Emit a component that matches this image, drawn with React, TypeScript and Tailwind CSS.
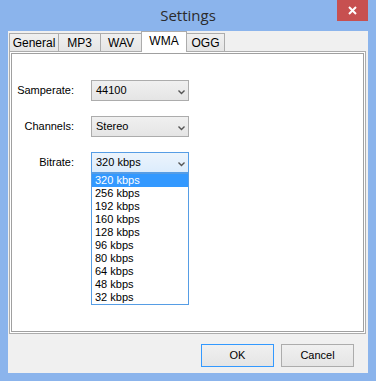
import React from 'react';

const BITRATES = ['320 kbps', '256 kbps', '192 kbps', '160 kbps', '128 kbps', '96 kbps', '80 kbps', '64 kbps', '48 kbps', '32 kbps'];

const TABS = [
  { name: 'General', w: 'w-[50px]' },
  { name: 'MP3', w: 'w-[43px]' },
  { name: 'WAV', w: 'w-[42px]' },
  { name: 'WMA', w: 'w-[46px]' },
  { name: 'OGG', w: 'w-[39px]' },
];

function Chevron() {
  return (
    <svg width="7" height="5" viewBox="0 0 7 5" className="absolute right-[3px] top-[9px]">
      <path d="M0.5 0.5 L3.5 3.5 L6.5 0.5" fill="none" stroke="#555" strokeWidth="1.4" />
    </svg>
  );
}

function Select({ value, focused }: { value: string; focused?: boolean }) {
  return (
    <div
      className={
        focused
          ? 'relative w-[98px] h-[21px] border border-[#569de5] bg-gradient-to-b from-[#ecf4fc] to-[#dcecfc] pl-[4px] leading-[19px]'
          : 'relative w-[98px] h-[21px] border border-[#acacac] bg-gradient-to-b from-[#f0f0f0] to-[#e5e5e5] pl-[4px] leading-[19px]'
      }
    >
      {value}
      <Chevron />
    </div>
  );
}

function Row({ label, children }: { label: string; children: React.ReactNode }) {
  return (
    <div className="flex items-center">
      <div className="w-[62px] text-right">{label}</div>
      <div className="ml-[17px]">{children}</div>
    </div>
  );
}

export default function App() {
  return (
    <div className="w-[376px] h-[381px] bg-[#8bb4ec] flex flex-col text-[11px] text-black" style={{ fontFamily: '"Liberation Sans", Arial, sans-serif' }}>
      {/* title bar */}
      <div className="relative h-[31px] flex items-center justify-center">
        <span className="text-[15px] text-[#2b2b2b] -mt-[1px]" style={{ fontFamily: '"Open Sans", "Noto Sans", sans-serif' }}>
          Settings
        </span>
        <div className="absolute right-[8px] top-0 w-[31px] h-[21px] bg-[#c75050] flex items-center justify-center">
          <svg width="9" height="9" viewBox="0 0 9 9">
            <path d="M1 1 L8 8 M8 1 L1 8" stroke="#fff" strokeWidth="2" />
          </svg>
        </div>
      </div>

      {/* client */}
      <div className="mx-[8px] h-[342px] bg-[#f0f0f0] flex flex-col">
        <div className="flex items-end h-[20px] pl-[1px] relative z-10">
          {TABS.map((t) => {
            const active = t.name === 'WMA';
            return (
              <div
                key={t.name}
                className={
                  active
                    ? `${t.w} -ml-px first:ml-0 h-[21px] -mb-px bg-white border border-b-0 border-[#acacac] flex items-center justify-center pb-[3px]`
                    : `${t.w} -ml-px first:ml-0 h-[18px] bg-gradient-to-b from-[#f0f0f0] to-[#e5e5e5] border border-b-0 border-[#acacac] flex items-center justify-center text-[12px]`
                }
              >
                <span className={active ? 'text-[12px]' : ''}>{t.name}</span>
              </div>
            );
          })}
        </div>

        {/* tab page */}
        <div className="ml-[1px] w-[357px] h-[283px] border border-[#acacac] bg-white p-[1px]">
          <div className="w-full h-full border border-[#a0a0a0] bg-white pt-[26px] flex flex-col gap-[15px]">
            <Row label="Samperate:">
              <Select value="44100" />
            </Row>
            <Row label="Channels:">
              <Select value="Stereo" />
            </Row>
            <Row label="Bitrate:">
              <div className="relative">
                <Select value="320 kbps" focused />
                <div className="absolute left-0 top-full w-[98px] h-[132px] border border-[#569de5] bg-white z-20">
                  {BITRATES.map((b, i) => (
                    <div
                      key={b}
                      className={i === 0 ? 'h-[13px] leading-[13px] pl-[3px] bg-[#3399ff] text-white' : 'h-[13px] leading-[13px] pl-[3px]'}
                    >
                      {b}
                    </div>
                  ))}
                </div>
              </div>
            </Row>
          </div>
        </div>

        {/* buttons */}
        <div className="flex justify-end gap-[7px] mt-[10px] pr-[14px]">
          <div className="w-[73px] h-[23px] border border-[#3399ff] bg-gradient-to-b from-[#f0f0f0] to-[#e5e5e5] flex items-center justify-center">OK</div>
          <div className="w-[73px] h-[23px] border border-[#acacac] bg-gradient-to-b from-[#f0f0f0] to-[#e5e5e5] flex items-center justify-center">Cancel</div>
        </div>
      </div>
    </div>
  );
}
